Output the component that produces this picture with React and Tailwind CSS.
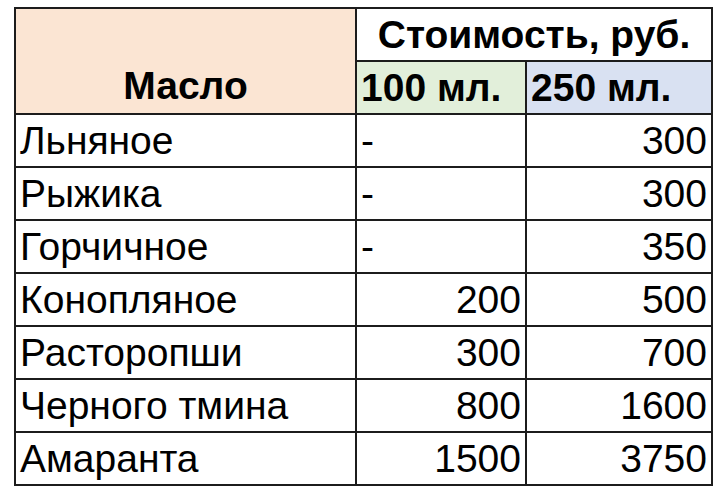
// App.jsx - таблица стоимости масел
const rows = [
  { name: 'Льняное', small: '-', big: '300' },
  { name: 'Рыжика', small: '-', big: '300' },
  { name: 'Горчичное', small: '-', big: '350' },
  { name: 'Конопляное', small: '200', big: '500' },
  { name: 'Расторопши', small: '300', big: '700' },
  { name: 'Черного тмина', small: '800', big: '1600' },
  { name: 'Амаранта', small: '1500', big: '3750' },
];

const cell = 'border-2 border-[#1c1c1c] h-[53px] px-[4px] leading-none';

export default function App() {
  return (
    <div className="w-[720px] h-[490px] bg-white pt-[7px] pl-[14px] font-['Liberation_Sans',Arial,sans-serif] text-black text-[39px]">
      <table className="border-collapse table-fixed w-[697px]">
        <colgroup>
          <col className="w-[341px]" />
          <col className="w-[170px]" />
          <col className="w-[186px]" />
        </colgroup>
        <thead>
          <tr>
            <th rowSpan={2} className={`${cell} bg-[#fbe5d3] font-bold text-center align-bottom pb-[8px]`}>
              Масло
            </th>
            <th colSpan={2} className={`${cell} bg-white font-bold text-center`}>
              Стоимость, руб.
            </th>
          </tr>
          <tr>
            <th className={`${cell} bg-[#e2efda] font-bold text-left`}>100 мл.</th>
            <th className={`${cell} bg-[#d9e1f2] font-bold text-left`}>250 мл.</th>
          </tr>
        </thead>
        <tbody>
          {rows.map((r) => (
            <tr key={r.name}>
              <td className={`${cell} text-left`}>{r.name}</td>
              <td className={`${cell} ${r.small === '-' ? 'text-left' : 'text-right'}`}>{r.small}</td>
              <td className={`${cell} text-right`}>{r.big}</td>
            </tr>
          ))}
        </tbody>
      </table>
    </div>
  );
}
